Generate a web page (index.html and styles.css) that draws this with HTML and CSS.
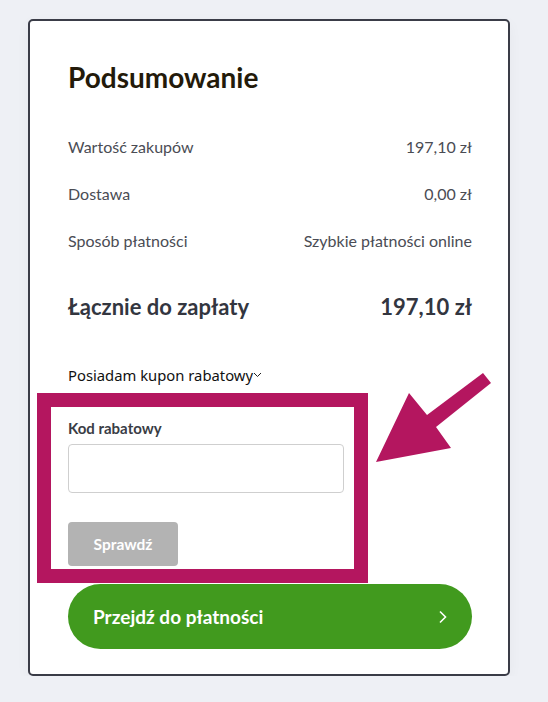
FILE: index.html
```html
<!DOCTYPE html>
<html lang="pl">
<head>
    <meta charset="UTF-8">
    <title>Podsumowanie</title>
    <link rel="stylesheet" href="styles.css">
</head>
<body>
    <div class="summary">
        <h1>Podsumowanie</h1>

        <div class="row">
            <span>Wartość zakupów</span>
            <span>197,10 zł</span>
        </div>
        <div class="row">
            <span>Dostawa</span>
            <span>0,00 zł</span>
        </div>
        <div class="row">
            <span>Sposób płatności</span>
            <span>Szybkie płatności online</span>
        </div>

        <div class="total">
            <span>Łącznie do zapłaty</span>
            <span>197,10 zł</span>
        </div>

        <div class="coupon-toggle">
            Posiadam kupon rabatowy<svg width="9" height="6" viewBox="0 0 9 6"><path d="M1 1l3.5 3.5L8 1" fill="none" stroke="#222" stroke-width="1"/></svg>
        </div>

        <form class="coupon-form">
            <label for="code">Kod rabatowy</label>
            <input type="text" id="code">
            <button type="button" class="check-btn">Sprawdź</button>
        </form>

        <button type="button" class="pay-btn">
            <span>Przejdź do płatności</span>
            <svg width="10" height="14" viewBox="0 0 10 14"><path d="M2 1.5l5.5 5.5L2 12.5" fill="none" stroke="#fff" stroke-width="1.6"/></svg>
        </button>

        <!-- annotation over the screenshot -->
        <div class="highlight"></div>
        <svg class="arrow" width="548" height="702" viewBox="0 0 548 702">
            <polygon points="483,373 491,383 436,427 451,448 376,462 409,393 427,415" fill="#b4165f"/>
        </svg>
    </div>
</body>
</html>
```

FILE: styles.css
```css
body {
    margin: 0;
    background-color: #eef0f5;
    font-family: Lato, "Noto Sans", sans-serif;
}
.summary {
    position: relative;
    width: 404px;
    margin: 19px 0 0 28px;
    padding: 39px 36px 25px 38px;
    background-color: white;
    border: 2px solid #3a3c47;
    border-radius: 5px;
    box-shadow: 0 4px 14px rgba(0,0,0,0.04);
}
h1 {
    margin: 0 0 41px;
    font-size: 28px;
    line-height: 34px;
    font-weight: 700;
    color: #231a0a;
}
.row {
    display: flex;
    justify-content: space-between;
    margin-bottom: 23px;
    font-size: 16px;
    line-height: 24px;
    color: #4a4c54;
}
.total {
    display: flex;
    justify-content: space-between;
    margin-top: 40px;
    font-size: 22px;
    line-height: 28px;
    font-weight: 700;
    color: #33363f;
}
.coupon-toggle {
    display: flex;
    align-items: center;
    margin-top: 44px;
    font-family: "Noto Sans", sans-serif;
    font-size: 14.8px;
    line-height: 20px;
    color: #111;
}
.coupon-form {
    display: flex;
    flex-direction: column;
    align-items: flex-start;
    margin-top: 33px;
}
label {
    font-size: 15px;
    line-height: 20px;
    font-weight: 700;
    color: #3a3d45;
    margin-bottom: 6px;
}
input {
    width: 276px;
    height: 49px;
    box-sizing: border-box;
    border: 1px solid #cfcfcf;
    border-radius: 4px;
    padding: 0 12px;
}
.check-btn {
    margin-top: 29px;
    width: 110px;
    height: 44px;
    border: none;
    border-radius: 4px;
    background-color: #b3b3b3;
    color: white;
    font-family: Lato, sans-serif;
    font-size: 15.5px;
    font-weight: 700;
}
.pay-btn {
    display: flex;
    justify-content: space-between;
    align-items: center;
    width: 100%;
    height: 65px;
    margin-top: 18px;
    padding: 0 24px 0 25px;
    border: none;
    border-radius: 33px;
    background-color: #419a1e;
    color: white;
    font-family: Lato, sans-serif;
    font-size: 19px;
    font-weight: 700;
    cursor: pointer;
}
.highlight {
    position: absolute;
    left: 7px;
    top: 372px;
    width: 303px;
    height: 162px;
    border: 14px solid #b4165f;
}
.arrow {
    position: absolute;
    left: -30px;
    top: -21px;
    pointer-events: none;
}
```
